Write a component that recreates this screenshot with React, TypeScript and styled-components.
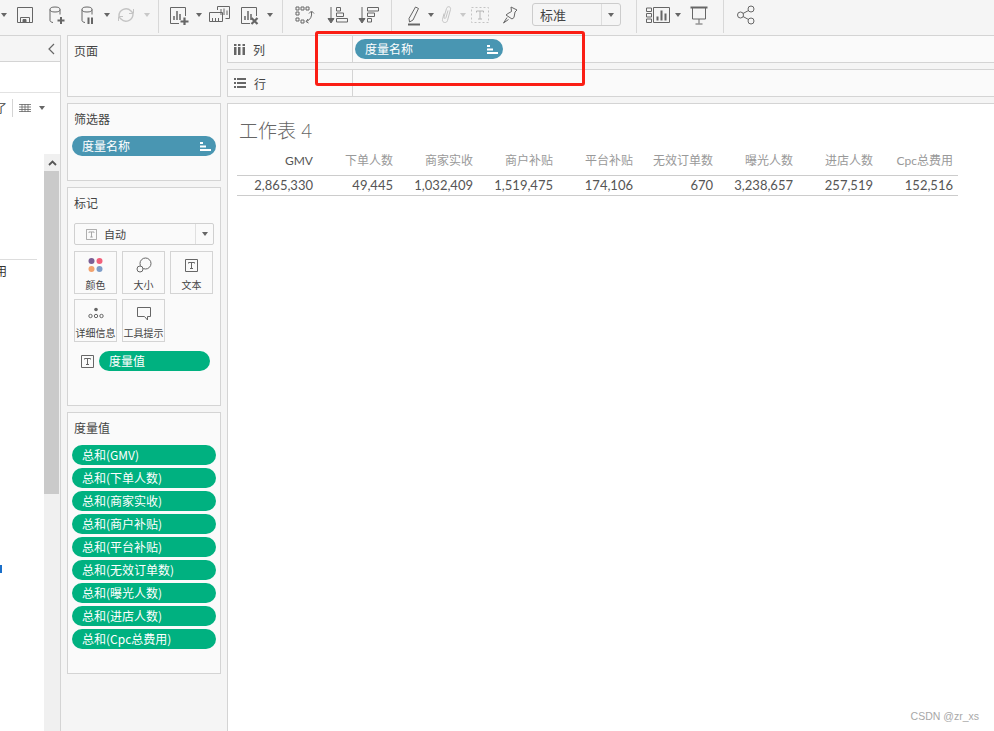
import React from "react";
import styled, { createGlobalStyle } from "styled-components";

const GlobalStyle = createGlobalStyle`
  html, body {
    margin: 0;
    padding: 0;
    width: 994px;
    height: 731px;
    overflow: hidden;
    background: #f5f5f5;
    font-family: "Noto Sans CJK SC", "Liberation Sans", sans-serif;
  }
`;

const STROKE = "#666666";
const FAINT = "#c4c4c4";

const Page = styled.div`
  position: relative;
  width: 994px;
  height: 731px;
  overflow: hidden;
  display: flex;
  flex-direction: column;
  background: #f5f5f5;
`;

const Toolbar = styled.div`
  height: 35px;
  flex: none;
  display: flex;
  align-items: flex-start;
`;

const Tool = styled.div<{ $w: number; $ml: number }>`
  width: ${(p) => p.$w}px;
  margin-left: ${(p) => p.$ml}px;
  height: 24px;
  margin-top: 3px;
  flex: none;
  display: flex;
  align-items: center;
  justify-content: center;
`;

const Sep = styled.div<{ $ml: number }>`
  width: 1px;
  height: 33px;
  margin-left: ${(p) => p.$ml}px;
  background: #d8d8d8;
  flex: none;
`;

const Caret = styled.div<{ $faint?: boolean }>`
  width: 0;
  height: 0;
  border-left: 3.5px solid transparent;
  border-right: 3.5px solid transparent;
  border-top: 4px solid ${(p) => (p.$faint ? "#c8c8c8" : "#666666")};
`;

const ViewSelect = styled.div`
  width: 89px;
  height: 23px;
  margin-top: 3px;
  margin-left: 10px;
  box-sizing: border-box;
  flex: none;
  display: flex;
  border: 1px solid #cccccc;
  border-radius: 3px;
  font-size: 13px;
  line-height: 21px;
  color: #444444;
`;

const ViewSelectLabel = styled.div`
  width: 69px;
  padding-left: 7px;
  box-sizing: border-box;
  border-right: 1px solid #dddddd;
`;

const ViewSelectArrow = styled.div`
  flex: 1;
  display: flex;
  align-items: center;
  justify-content: center;
`;

const Body = styled.div`
  flex: 1;
  display: flex;
  min-height: 0;
`;

const DataPane = styled.div`
  width: 61px;
  flex: none;
  box-sizing: border-box;
  display: flex;
  flex-direction: column;
  border-right: 1px solid #d4d4d4;
  background: #ffffff;
`;

const PaneHead = styled.div`
  height: 27px;
  flex: none;
  box-sizing: border-box;
  display: flex;
  align-items: center;
  justify-content: flex-end;
  padding-right: 4px;
  background: #f5f5f5;
  border-top: 1px solid #d4d4d4;
  border-bottom: 1px solid #d4d4d4;
`;

const SearchRow = styled.div`
  height: 31px;
  flex: none;
  box-sizing: border-box;
  border-bottom: 1px solid #e2e2e2;
`;

const PaneTools = styled.div`
  height: 61px;
  flex: none;
  box-sizing: border-box;
  padding-top: 6px;
  display: flex;
  align-items: flex-start;
  font-size: 12px;
  line-height: 18px;
  color: #444444;
`;

const ClippedChar = styled.span`
  width: 7px;
  overflow: hidden;
  flex: none;
  display: flex;
  justify-content: flex-end;
`;

const PaneToolSep = styled.div`
  width: 1px;
  height: 18px;
  margin-left: 5px;
  background: #d4d4d4;
`;

const PaneGridIcon = styled.div`
  margin-left: 6px;
  height: 18px;
  display: flex;
  align-items: center;
`;

const PaneCaret = styled.div`
  margin-left: 8px;
  height: 18px;
  display: flex;
  align-items: center;
`;

const TreeArea = styled.div`
  flex: 1;
  display: flex;
  min-height: 0;
`;

const TreeList = styled.div`
  width: 44px;
  flex: none;
  display: flex;
  flex-direction: column;
  padding-top: 105px;
`;

const TreeRule = styled.div`
  width: 37px;
  height: 1px;
  background: #dddddd;
`;

const TreeLeaf = styled.div`
  width: 7px;
  margin-top: 2px;
  overflow: hidden;
  display: flex;
  justify-content: flex-end;
  font-size: 12px;
  line-height: 18px;
  color: #333333;
`;

const TreeMark = styled.div`
  width: 2px;
  height: 8px;
  margin-top: 285px;
  background: #1a6fc9;
`;

const Scrollbar = styled.div`
  width: 16px;
  flex: none;
  display: flex;
  flex-direction: column;
  background: #f0f0f0;
`;

const ScrollUp = styled.div`
  height: 17px;
  flex: none;
  display: flex;
  align-items: center;
  justify-content: center;
`;

const ScrollThumb = styled.div`
  height: 323px;
  width: 15px;
  background: #cacaca;
`;

const CardsColumn = styled.div`
  width: 154px;
  flex: none;
  margin: 0 6px;
  display: flex;
  flex-direction: column;
  gap: 6px;
`;

const Card = styled.section<{ $h: number }>`
  height: ${(p) => p.$h}px;
  box-sizing: border-box;
  flex: none;
  padding: 0 4px;
  background: #fafafa;
  border: 1px solid #d4d4d4;
`;

const CardTitle = styled.div<{ $mb: number }>`
  height: 18px;
  margin: 6px 0 ${(p) => p.$mb}px 2px;
  font-size: 12px;
  line-height: 18px;
  color: #444444;
`;

const Pill = styled.div<{ $kind: "dim" | "measure"; $w?: number }>`
  width: ${(p) => (p.$w ? `${p.$w}px` : "100%")};
  height: 20px;
  box-sizing: border-box;
  flex: none;
  display: flex;
  align-items: center;
  justify-content: space-between;
  padding: 0 5px 0 10px;
  border-radius: 10px;
  font-size: 12px;
  line-height: 20px;
  white-space: nowrap;
  color: #ffffff;
  background: ${(p) => (p.$kind === "dim" ? "#4996b2" : "#00b180")};
`;

const PillStack = styled.div`
  display: flex;
  flex-direction: column;
  gap: 3px;
`;

const MarkSelect = styled.div`
  width: 140px;
  height: 22px;
  margin-left: 2px;
  box-sizing: border-box;
  display: flex;
  border: 1px solid #d0d0d0;
  border-radius: 2px;
  background: #fafafa;
`;

const MarkSelectLabel = styled.div`
  flex: 1;
  display: flex;
  align-items: center;
  gap: 7px;
  padding-left: 11px;
  font-size: 11px;
  color: #444444;
  border-right: 1px solid #e0e0e0;
`;

const MarkSelectArrow = styled.div`
  width: 17px;
  display: flex;
  align-items: center;
  justify-content: center;
`;

const TileGrid = styled.div`
  margin: 6px 0 0 2px;
  display: grid;
  grid-template-columns: 43px 43px 43px;
  grid-auto-rows: 43px;
  column-gap: 5px;
  row-gap: 5px;
`;

const Tile = styled.div`
  box-sizing: border-box;
  display: flex;
  flex-direction: column;
  align-items: center;
  border: 1px solid #d4d4d4;
  background: #fafafa;
`;

const TileIcon = styled.div`
  height: 26px;
  flex: none;
  display: flex;
  align-items: center;
  justify-content: center;
`;

const TileLabel = styled.div`
  font-size: 10px;
  line-height: 14px;
  white-space: nowrap;
  color: #444444;
`;

const EncodingRow = styled.div`
  display: flex;
  align-items: center;
  gap: 5px;
  margin: 9px 0 0 9px;
`;

const Main = styled.div`
  flex: 1;
  min-width: 0;
  display: flex;
  flex-direction: column;
  gap: 6px;
`;

const Shelf = styled.div<{ $h: number }>`
  height: ${(p) => p.$h}px;
  flex: none;
  box-sizing: border-box;
  display: flex;
  background: #fafafa;
  border: 1px solid #d4d4d4;
  border-right: none;
`;

const ShelfLabel = styled.div`
  width: 125px;
  flex: none;
  box-sizing: border-box;
  display: flex;
  align-items: center;
  gap: 8px;
  padding-left: 6px;
  border-right: 1px solid #d4d4d4;
  font-size: 12px;
  color: #444444;
`;

const ShelfBody = styled.div`
  flex: 1;
  display: flex;
  align-items: center;
  padding-left: 2px;
`;

const Canvas = styled.div`
  flex: 1;
  box-sizing: border-box;
  padding: 15px 0 0 9px;
  background: #ffffff;
  border-top: 1px solid #d4d4d4;
  border-left: 1px solid #d4d4d4;
`;

const SheetTitle = styled.h1`
  margin: 0 0 0 2px;
  height: 24px;
  font-size: 19px;
  font-weight: 300;
  line-height: 24px;
  color: #666666;
  font-family: "Lato", "Noto Sans CJK SC", sans-serif;
`;

const DataTable = styled.div`
  width: 721px;
  margin-top: 6px;
  display: grid;
  grid-template-columns: 81px repeat(8, 80px);
  font-family: "Lato", "Noto Sans CJK SC", sans-serif;
  border-bottom: 1px solid #cccccc;
`;

const HeadCell = styled.div<{ $strong?: boolean }>`
  height: 26px;
  padding-right: 5px;
  text-align: right;
  font-size: 12px;
  line-height: 23px;
  color: ${(p) => (p.$strong ? "#555555" : "#999999")};
  border-bottom: 1px solid #cccccc;
`;

const ValueCell = styled.div`
  height: 19px;
  padding-right: 5px;
  text-align: right;
  font-size: 13px;
  line-height: 18px;
  color: #555555;
`;

const Highlight = styled.div`
  position: absolute;
  left: 315px;
  top: 31px;
  width: 270px;
  height: 55px;
  box-sizing: border-box;
  border: 3px solid #fa1e14;
  border-radius: 3px;
  pointer-events: none;
`;

const Watermark = styled.div`
  position: absolute;
  right: 15px;
  bottom: 8px;
  font-family: "Liberation Sans", sans-serif;
  font-size: 10.5px;
  line-height: 14px;
  color: #a8a8a8;
`;

const Ico = ({ children, w = 24, h = 24 }: { children: React.ReactNode; w?: number; h?: number }) => (
  <svg width={w} height={h} viewBox={`0 0 ${w} ${h}`} fill="none" stroke={STROKE} strokeWidth="1">
    {children}
  </svg>
);

const SaveIcon = () => (
  <Ico>
    <path d="M4.5 4.5h15v15h-15z" />
    <path d="M7.5 19.5v-5h9v5" />
    <path d="M10 16.5h3v3h-3z" fill={STROKE} />
  </Ico>
);

const Cylinder = () => (
  <>
    <ellipse cx="12" cy="6.5" rx="5" ry="2.5" />
    <path d="M7 6.5v11c0 1 1.500 1.800 3 2M17 6.500v5" />
  </>
);

const DbAddIcon = () => (
  <Ico>
    <Cylinder />
    <path d="M18 14v7M14.500 17.500h7" stroke={STROKE} strokeWidth="2" />
  </Ico>
);

const DbPauseIcon = () => (
  <Ico>
    <Cylinder />
    <path d="M13.500 14.500v6.500M17 14.500v6.500" strokeWidth="2" />
  </Ico>
);

const RefreshIcon = () => (
  <Ico>
    <path d="M5 13a7 7 0 0 1 12-5l2 2M19 11a7 7 0 0 1-12 5l-2-2" stroke={FAINT} strokeWidth="1.400" />
    <path d="M19.500 6v4.500H15M4.500 18v-4.500H9" stroke={FAINT} />
  </Ico>
);

const ChartFrame = () => (
  <>
    <path d="M13 20.500H4.500V4.500h15V13" />
    <path d="M8 17v-4M11 17V8M14 17v-6" strokeWidth="1.500" />
  </>
);

const ChartAddIcon = () => (
  <Ico>
    <ChartFrame />
    <path d="M18.500 14.500v7.500M14.500 18.500h8" strokeWidth="2.200" />
  </Ico>
);

const ChartCopyIcon = () => (
  <Ico>
    <path d="M10.500 7V3.500h12v12h-4" />
    <path d="M2.500 9.500h13v9h-13z" />
    <path d="M14 12V6M17 12V5.500M20 12V7.500M5.500 18v-3M8.500 18v-3M11.500 18v-3" />
  </Ico>
);

const ChartClearIcon = () => (
  <Ico>
    <ChartFrame />
    <path d="M14.500 15l6 6M20.500 15l-6 6" strokeWidth="2.200" />
  </Ico>
);

const SwapIcon = () => (
  <Ico>
    <path d="M4 4h3v3H4zM9 4h3v3H9zM14 4h3v3h-3zM4 9h3v3H4zM4 15h3v3H4zM9 17h3v3H9z" />
    <path d="M19.500 9a9 9 0 0 1-5 9.500" />
    <path d="M17 10.500l2.500-2.500 2.500 2.500M16 16l-2 2.500 2.500 1.500" />
  </Ico>
);

const SortAscIcon = () => (
  <Ico>
    <path d="M7 4v14" />
    <path d="M4 15.500h6L7 20z" fill={STROKE} />
    <path d="M12.500 4.500h4v3.500h-4zM12.500 10h7v3.500h-7zM12.500 15.500h11v3.500h-11z" />
  </Ico>
);

const SortDescIcon = () => (
  <Ico>
    <path d="M6 4v14" />
    <path d="M3 15.500h6L6 20z" fill={STROKE} />
    <path d="M11.500 4.500h11v3.500h-11zM11.500 10h7v3.500h-7zM11.500 15.500h4v3.500h-4z" />
  </Ico>
);

const HighlightIcon = () => (
  <Ico>
    <path d="M7 15.500L13.500 4l3 1.500-5.500 11.500-3.500 2z" />
    <path d="M6 21.500h12" stroke="#666666" strokeWidth="2" />
  </Ico>
);

const ClipIcon = () => (
  <Ico>
    <path d="M9 10.500l-1.500 6c-.8 3 4 4.500 5 1l3-11c.8-3-3-4-4-1L9 14c-.3 1.500 1.500 2 2 .5l2-7" stroke={FAINT} />
  </Ico>
);

const DashedTextIcon = () => (
  <Ico>
    <path d="M3.500 4.500h17v15h-17z" stroke={FAINT} strokeDasharray="2 2" />
    <path d="M8.500 9.500v-1.500h7v1.500M12 8v8M10 16h4" stroke="#b4b4b4" />
  </Ico>
);

const PinIcon = () => (
  <Ico>
    <path d="M13 4l6 3-2 2-1 5.500-2 1.500-6-4 2-1.500 3.500-2zM9 14.500L5.500 20l5-3.500" />
  </Ico>
);

const ShowMeIcon = () => (
  <Ico w={32}>
    <path d="M4.500 5h5v3.500h-5zM4.500 10.500h5V14h-5zM4.500 16h5v3.500h-5zM11.500 4.500h16v15h-16z" />
    <path d="M15.500 17.500v-4M19.500 17.500v-10M23.500 17.500v-7" strokeWidth="2" />
  </Ico>
);

const PresentIcon = () => (
  <Ico>
    <path d="M3.500 4.500h17" strokeWidth="2" />
    <path d="M5.500 5v11h13V5M12 16v4.500M8.500 21h7" />
  </Ico>
);

const ShareIcon = () => (
  <Ico>
    <circle cx="6.500" cy="12" r="3" />
    <circle cx="17" cy="6" r="3" />
    <circle cx="17" cy="18" r="3" />
    <path d="M9 10.500l5.500-3M9 13.500l5.500 3" />
  </Ico>
);

const TextBoxIcon = ({ size = 13, muted = false }: { size?: number; muted?: boolean }) => (
  <svg width={size} height={size} viewBox="0 0 13 13" fill="none" stroke={muted ? "#9a9a9a" : STROKE}>
    <path d="M.5.500h12v12H.5z" />
    <path d="M3.500 4.500v-1h6v1M6.500 3.500v6M5 9.500h3" />
  </svg>
);

const SortedBars = () => (
  <svg width="11" height="9" viewBox="0 0 11 9" fill="#ffffff">
    <path d="M0 0h3v2H0zM0 3.500h6v2H0zM0 7h11v2H0z" />
  </svg>
);

const ColorIcon = () => (
  <svg width="18" height="18" viewBox="0 0 18 18">
    <circle cx="4.500" cy="5" r="3" fill="#7b5f95" />
    <circle cx="12.500" cy="5" r="3" fill="#f2607a" />
    <circle cx="4.500" cy="13" r="3" fill="#f2a36f" />
    <circle cx="12.500" cy="13" r="3" fill="#7d9dc9" />
  </svg>
);

const SizeIcon = () => (
  <svg width="16" height="16" viewBox="0 0 16 16" fill="none" stroke={STROKE}>
    <circle cx="9.500" cy="6.500" r="5.500" fill="#fafafa" />
    <circle cx="4" cy="12" r="3" fill="#fafafa" />
  </svg>
);

const DetailIcon = () => (
  <svg width="16" height="12" viewBox="0 0 16 12" fill="none" stroke={STROKE}>
    <circle cx="8" cy="2.500" r="1.800" fill={STROKE} stroke="none" />
    <circle cx="2.500" cy="9" r="1.700" />
    <circle cx="8" cy="9" r="1.700" />
    <circle cx="13.500" cy="9" r="1.700" />
  </svg>
);

const TooltipIcon = () => (
  <svg width="16" height="15" viewBox="0 0 16 15" fill="none" stroke={STROKE}>
    <path d="M1.500 1.500h13v9h-3v3.500l-3-3.500h-7z" />
  </svg>
);

const ColumnsIcon = () => (
  <svg width="11" height="11" viewBox="0 0 11 11" fill={STROKE}>
    <path d="M0 3h2.500v8H0zM4 3h2.500v8H4zM8.500 3H11v8H8.500zM0 0h2.500v2H0zM4 0h2.500v2H4zM8.500 0H11v2H8.500z" />
  </svg>
);

const RowsIcon = () => (
  <svg width="12" height="10" viewBox="0 0 12 10" fill={STROKE}>
    <path d="M0 0h2v2H0zM3 0h9v2H3zM0 4h2v2H0zM3 4h9v2H3zM0 8h2v2H0zM3 8h9v2H3z" />
  </svg>
);

const ListGridIcon = () => (
  <svg width="12" height="8" viewBox="0 0 12 8" fill="none" stroke={STROKE}>
    <path d="M0 .5h12M0 3h12M0 5.500h12M0 7.500h12M3 0v8M6 0v8M9 0v8" strokeWidth=".8" />
  </svg>
);

const ChevronLeft = () => (
  <svg width="9" height="12" viewBox="0 0 9 12" fill="none" stroke={STROKE} strokeWidth="1.200">
    <path d="M7 1L2 6l5 5" />
  </svg>
);

const ChevronUp = () => (
  <svg width="9" height="6" viewBox="0 0 9 6" fill="none" stroke="#555555" strokeWidth="1.800">
    <path d="M1 5l3.500-3.500L8 5" />
  </svg>
);

type ToolDef = { w: number; ml: number; node: React.ReactNode; key: string };

const tool = (key: string, ml: number, node: React.ReactNode, w = 24): ToolDef => ({ key, ml, node, w });
const caret = (key: string, ml: number, faint = false): ToolDef => ({
  key,
  ml,
  w: 7,
  node: <Caret $faint={faint} />,
});

const fileTools: ToolDef[] = [
  caret("c0", 0),
  tool("save", 6, <SaveIcon />),
  tool("dbadd", 6, <DbAddIcon />),
  tool("dbpause", 8, <DbPauseIcon />),
  caret("c1", 4),
  tool("refresh", 4, <RefreshIcon />),
  caret("c2", 5, true),
];

const sheetTools: ToolDef[] = [
  tool("chartadd", 7, <ChartAddIcon />),
  caret("c3", 5),
  tool("chartcopy", 5, <ChartCopyIcon />),
  tool("chartclear", 6, <ChartClearIcon />),
  caret("c4", 5),
];

const sortTools: ToolDef[] = [
  tool("swap", 9, <SwapIcon />),
  tool("sortasc", 8, <SortAscIcon />),
  tool("sortdesc", 8, <SortDescIcon />),
];

const markTools: ToolDef[] = [
  tool("highlight", 10, <HighlightIcon />),
  caret("c5", 1),
  tool("clip", 1, <ClipIcon />),
  caret("c6", 0, true),
  tool("dashedtext", 2, <DashedTextIcon />),
  tool("pin", 6, <PinIcon />),
];

const showTools: ToolDef[] = [
  tool("showme", 5, <ShowMeIcon />, 32),
  caret("c7", 0),
  tool("present", 6, <PresentIcon />),
];

const renderTools = (list: ToolDef[]) =>
  list.map((t) => (
    <Tool key={t.key} $w={t.w} $ml={t.ml}>
      {t.node}
    </Tool>
  ));

const measures = ["GMV", "下单人数", "商家实收", "商户补贴", "平台补贴", "无效订单数", "曝光人数", "进店人数", "Cpc总费用"];
const values = ["2,865,330", "49,445", "1,032,409", "1,519,475", "174,106", "670", "3,238,657", "257,519", "152,516"];

const tiles = [
  { label: "颜色", icon: <ColorIcon /> },
  { label: "大小", icon: <SizeIcon /> },
  { label: "文本", icon: <TextBoxIcon /> },
  { label: "详细信息", icon: <DetailIcon /> },
  { label: "工具提示", icon: <TooltipIcon /> },
];

export default function App() {
  return (
    <Page>
      <GlobalStyle />
      <Toolbar>
        {renderTools(fileTools)}
        <Sep $ml={8} />
        {renderTools(sheetTools)}
        <Sep $ml={9} />
        {renderTools(sortTools)}
        <Sep $ml={11} />
        {renderTools(markTools)}
        <ViewSelect>
          <ViewSelectLabel>标准</ViewSelectLabel>
          <ViewSelectArrow>
            <Caret />
          </ViewSelectArrow>
        </ViewSelect>
        <Sep $ml={15} />
        {renderTools(showTools)}
        <Sep $ml={12} />
        <Tool $w={24} $ml={10}>
          <ShareIcon />
        </Tool>
      </Toolbar>

      <Body>
        <DataPane>
          <PaneHead>
            <ChevronLeft />
          </PaneHead>
          <SearchRow />
          <PaneTools>
            <ClippedChar>了</ClippedChar>
            <PaneToolSep />
            <PaneGridIcon>
              <ListGridIcon />
            </PaneGridIcon>
            <PaneCaret>
              <Caret />
            </PaneCaret>
          </PaneTools>
          <TreeArea>
            <TreeList>
              <TreeRule />
              <TreeLeaf>用</TreeLeaf>
              <TreeMark />
            </TreeList>
            <Scrollbar>
              <ScrollUp>
                <ChevronUp />
              </ScrollUp>
              <ScrollThumb />
            </Scrollbar>
          </TreeArea>
        </DataPane>

        <CardsColumn>
          <Card $h={62}>
            <CardTitle $mb={0}>页面</CardTitle>
          </Card>
          <Card $h={78}>
            <CardTitle $mb={8}>筛选器</CardTitle>
            <Pill $kind="dim">
              度量名称
              <SortedBars />
            </Pill>
          </Card>
          <Card $h={219}>
            <CardTitle $mb={11}>标记</CardTitle>
            <MarkSelect>
              <MarkSelectLabel>
                <TextBoxIcon size={11} muted />
                自动
              </MarkSelectLabel>
              <MarkSelectArrow>
                <Caret />
              </MarkSelectArrow>
            </MarkSelect>
            <TileGrid>
              {tiles.map((t) => (
                <Tile key={t.label}>
                  <TileIcon>{t.icon}</TileIcon>
                  <TileLabel>{t.label}</TileLabel>
                </Tile>
              ))}
            </TileGrid>
            <EncodingRow>
              <TextBoxIcon />
              <Pill $kind="measure" $w={111}>
                度量值
              </Pill>
            </EncodingRow>
          </Card>
          <Card $h={262}>
            <CardTitle $mb={8}>度量值</CardTitle>
            <PillStack>
              {measures.map((m) => (
                <Pill key={m} $kind="measure">
                  总和({m})
                </Pill>
              ))}
            </PillStack>
          </Card>
        </CardsColumn>

        <Main>
          <Shelf $h={28}>
            <ShelfLabel>
              <ColumnsIcon />列
            </ShelfLabel>
            <ShelfBody>
              <Pill $kind="dim" $w={148}>
                度量名称
                <SortedBars />
              </Pill>
            </ShelfBody>
          </Shelf>
          <Shelf $h={28}>
            <ShelfLabel>
              <RowsIcon />行
            </ShelfLabel>
            <ShelfBody />
          </Shelf>
          <Canvas>
            <SheetTitle>工作表 4</SheetTitle>
            <DataTable>
              {measures.map((m) => (
                <HeadCell key={m} $strong={m === "GMV"}>
                  {m}
                </HeadCell>
              ))}
              {values.map((v, i) => (
                <ValueCell key={i}>{v}</ValueCell>
              ))}
            </DataTable>
          </Canvas>
        </Main>
      </Body>

      <Highlight />
      <Watermark>CSDN @zr_xs</Watermark>
    </Page>
  );
}
